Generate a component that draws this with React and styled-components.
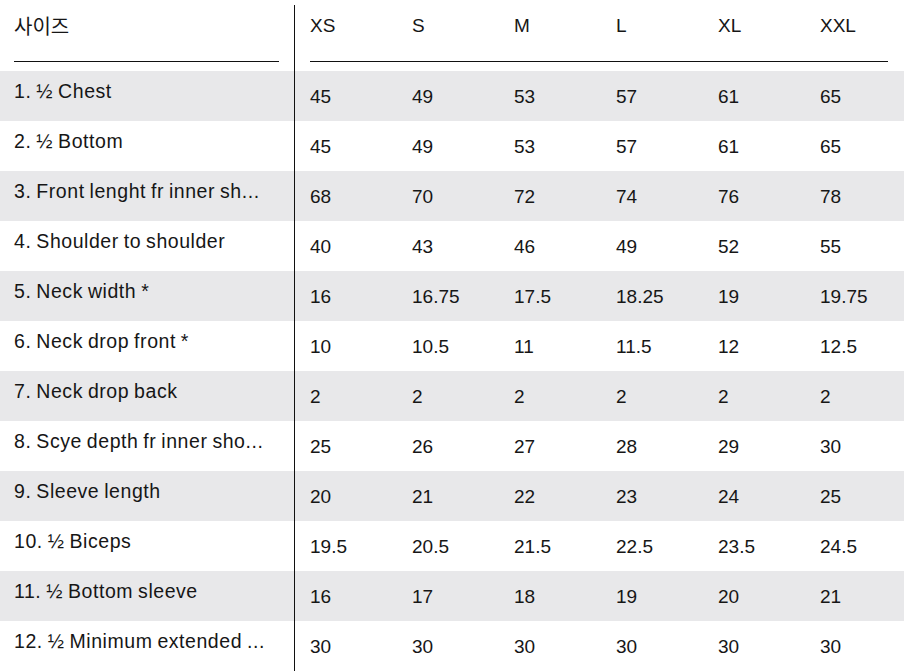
import React from "react";
import styled, { createGlobalStyle } from "styled-components";

const GlobalStyle = createGlobalStyle`
  body {
    margin: 0;
    background: #ffffff;
    font-family: "Liberation Sans", Arial, sans-serif;
    color: #161616;
  }
`;

const SIZES = ["XS", "S", "M", "L", "XL", "XXL"];

// labels as the sheet shows them (long ones already cut with "...")
const ROWS = [
  ["1. ½ Chest", "45", "49", "53", "57", "61", "65"],
  ["2. ½ Bottom", "45", "49", "53", "57", "61", "65"],
  ["3. Front lenght fr inner sh...", "68", "70", "72", "74", "76", "78"],
  ["4. Shoulder to shoulder", "40", "43", "46", "49", "52", "55"],
  ["5. Neck width *", "16", "16.75", "17.5", "18.25", "19", "19.75"],
  ["6. Neck drop front *", "10", "10.5", "11", "11.5", "12", "12.5"],
  ["7. Neck drop back", "2", "2", "2", "2", "2", "2"],
  ["8. Scye depth fr inner sho...", "25", "26", "27", "28", "29", "30"],
  ["9. Sleeve length", "20", "21", "22", "23", "24", "25"],
  ["10. ½ Biceps", "19.5", "20.5", "21.5", "22.5", "23.5", "24.5"],
  ["11. ½ Bottom sleeve", "16", "17", "18", "19", "20", "21"],
  ["12. ½ Minimum extended ...", "30", "30", "30", "30", "30", "30"],
];

const Table = styled.div`
  display: flex;
  flex-direction: column;
  width: 923px;
  font-size: 19px;
`;

const Row = styled.div`
  display: grid;
  grid-template-columns: 294px 1px 609px;
  height: ${(p) => (p.$head ? "71px" : "50px")};
`;

const Divider = styled.div`
  background: #111;
  margin-top: ${(p) => (p.$head ? "5px" : "0")};
`;

const LabelCell = styled.div`
  background: ${(p) => (p.$shade ? "#e8e8ea" : "#fff")};
  padding: 8px 10px 0 14px;
  line-height: 24px;
  font-size: 19.5px;
  letter-spacing: 0.55px;
  word-spacing: -1px;
  white-space: nowrap;
  overflow: hidden;
`;

const HeadLabel = styled.div`
  margin: 0 15px 0 14px;
  padding-top: 14px;
  height: 47px;
  line-height: 24px;
  font-size: 20px;
  border-bottom: 1px solid #111;
  font-family: "Noto Sans CJK KR", "Liberation Sans", sans-serif;
`;

const Values = styled.div`
  background: ${(p) => (p.$shade ? "#e8e8ea" : "#fff")};
  display: grid;
  grid-template-columns: repeat(6, 102px);
  padding-left: 15px;
  padding-top: 14px;
  line-height: 24px;
`;

const HeadValues = styled.div`
  margin: 0 16px 0 15px;
  height: 47px;
  padding-top: 14px;
  border-bottom: 1px solid #111;
  display: grid;
  grid-template-columns: repeat(6, 102px);
  line-height: 24px;
`;

const Cell = styled.span`
  white-space: nowrap;
`;

export default function App() {
  return (
    <>
      <GlobalStyle />
      <Table>
        <Row $head>
          <HeadLabel>사이즈</HeadLabel>
          <Divider $head />
          <HeadValues>
            {SIZES.map((s) => (
              <Cell key={s}>{s}</Cell>
            ))}
          </HeadValues>
        </Row>
        {ROWS.map(([label, ...vals], i) => (
          <Row key={label}>
            <LabelCell $shade={i % 2 === 0}>{label}</LabelCell>
            <Divider />
            <Values $shade={i % 2 === 0}>
              {vals.map((v, j) => (
                <Cell key={j}>{v}</Cell>
              ))}
            </Values>
          </Row>
        ))}
      </Table>
    </>
  );
}
